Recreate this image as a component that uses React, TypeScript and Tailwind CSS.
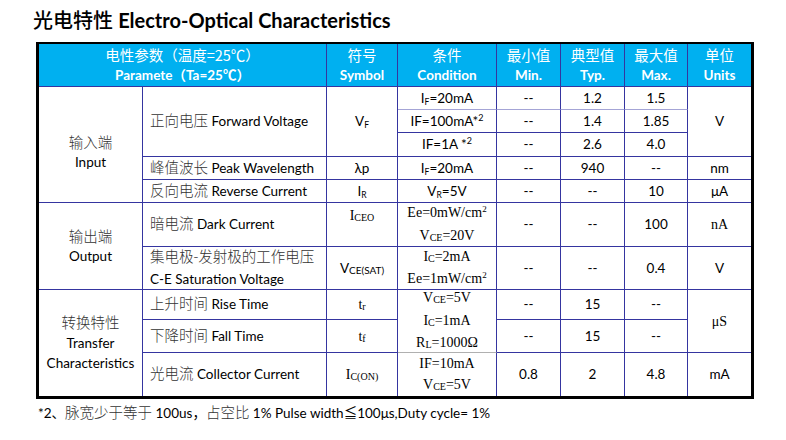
import React from "react";

const N = "border-[#3535a0]";

function Cell({
  c,
  children,
  serif,
}: {
  c: string;
  children?: React.ReactNode;
  serif?: boolean;
}) {
  return (
    <div
      className={`flex flex-col items-center justify-center text-center ${
        serif ? "font-['Liberation_Serif','Noto_Sans_CJK_SC',serif] text-[14px]" : "text-[13.5px]"
      } ${c}`}
    >
      {children}
    </div>
  );
}

function Sub({ children, serif }: { children: React.ReactNode; serif?: boolean }) {
  return (
    <span className={`${serif ? "text-[10px] top-[1px]" : "text-[8.5px] top-[2px]"} relative`}>{children}</span>
  );
}

function Sup({ children }: { children: React.ReactNode }) {
  return <span className="text-[9px] relative -top-[5px]">{children}</span>;
}

function Zh({ children }: { children: React.ReactNode }) {
  return (
    <span className="text-[#333] text-[14.5px] font-['Noto_Sans_CJK_SC',sans-serif] font-light">{children}</span>
  );
}

export default function App() {
  const rb = `border-r ${N}`;
  const bb = `border-b ${N}`;
  return (
    <div className="w-[786px] h-[440px] bg-white text-black font-['Lato','Noto_Sans_CJK_SC',sans-serif] pt-[7px]">
      <div className="pl-[33px] text-[20px] leading-[26px]">
        <span className="font-['Noto_Sans_CJK_SC',sans-serif] font-medium">光电特性</span>{" "}
        <span className="font-bold">Electro-Optical Characteristics</span>
      </div>
      <div className="ml-[36px] mt-[9px] w-[718px] border-black border-t-[2px] border-l-[3px] border-r-[3px] border-b-[3px]">
        <div className="grid grid-cols-[104px_184px_71px_99px_64px_64px_63px_63px] grid-rows-[43px_23px_23px_24px_23px_23px_44px_43px_30px_33px_43px]">
          {/* header */}
          <div className={`col-start-1 col-span-2 row-start-1 bg-[#00b0f0] text-white flex flex-col items-center justify-center text-[13.5px] leading-[21px] ${rb} ${bb}`}>
            <div className="font-['Noto_Sans_CJK_SC',sans-serif] text-[14.5px]">电性参数（温度=25℃）</div>
            <div className="font-bold">Paramete（Ta=25℃）</div>
          </div>
          {[
            ["符号", "Symbol"],
            ["条件", "Condition"],
            ["最小值", "Min."],
            ["典型值", "Typ."],
            ["最大值", "Max."],
            ["单位", "Units"],
          ].map(([zh, en], i) => (
            <div
              key={en}
              className={`row-start-1 bg-[#00b0f0] text-white flex flex-col items-center justify-center text-[13.5px] leading-[21px] ${bb} ${
                i < 5 ? rb : ""
              }`}
            >
              <div className="font-['Noto_Sans_CJK_SC',sans-serif] text-[14.5px]">{zh}</div>
              <div className="font-bold">{en}</div>
            </div>
          ))}

          {/* column 1 groups */}
          <Cell c={`col-start-1 row-start-2 row-span-5 leading-[20px] pt-[14px] ${rb} ${bb}`}>
            <Zh>输入端</Zh>
            <div>Input</div>
          </Cell>
          <Cell c={`col-start-1 row-start-7 row-span-2 leading-[21px] ${rb} ${bb}`}>
            <Zh>输出端</Zh>
            <div>Output</div>
          </Cell>
          <Cell c={`col-start-1 row-start-9 row-span-3 leading-[20.5px] ${rb}`}>
            <Zh>转换特性</Zh>
            <div>Transfer</div>
            <div>Characteristics</div>
          </Cell>

          {/* column 2 */}
          {[
            { r: "row-start-2 row-span-3", t: ["正向电压", "Forward Voltage"] },
            { r: "row-start-5", t: ["峰值波长", "Peak Wavelength"] },
            { r: "row-start-6", t: ["反向电流", "Reverse Current"] },
            { r: "row-start-7", t: ["暗电流", "Dark Current"] },
            { r: "row-start-9", t: ["上升时间", "Rise Time"] },
            { r: "row-start-10", t: ["下降时间", "Fall Time"] },
            { r: "row-start-11", t: ["光电流", "Collector Current"], last: true },
          ].map((x) => (
            <div
              key={x.t[1]}
              className={`col-start-2 ${x.r} flex items-center pl-[7px] pb-[2px] text-[13.5px] ${rb} ${x.last ? "" : bb}`}
            >
              <span>
                <Zh>{x.t[0]}</Zh> {x.t[1]}
              </span>
            </div>
          ))}
          <div className={`col-start-2 row-start-8 flex flex-col justify-center pl-[7px] pb-[2px] text-[13.5px] leading-[22px] ${rb} ${bb}`}>
            <div>
              <Zh>集电极-发射极的工作电压</Zh>
            </div>
            <div>C-E Saturation Voltage</div>
          </div>

          {/* column 3 symbol */}
          <Cell c={`col-start-3 row-start-2 row-span-3 ${rb} ${bb}`}>
            <span>
              V<Sub>F</Sub>
            </span>
          </Cell>
          <Cell c={`col-start-3 row-start-5 ${rb} ${bb}`}>λp</Cell>
          <Cell c={`col-start-3 row-start-6 ${rb} ${bb}`}>
            <span>
              I<Sub>R</Sub>
            </span>
          </Cell>
          <Cell serif c={`col-start-3 row-start-7 !justify-start pt-[2px] ${rb} ${bb}`}>
            <span>
              I<Sub serif>CEO</Sub>
            </span>
          </Cell>
          <Cell c={`col-start-3 row-start-8 ${rb} ${bb}`}>
            <span>
              V<Sub serif>CE(SAT)</Sub>
            </span>
          </Cell>
          <Cell serif c={`col-start-3 row-start-9 ${rb} ${bb}`}>
            <span>
              t<Sub serif>r</Sub>
            </span>
          </Cell>
          <Cell serif c={`col-start-3 row-start-10 ${rb} ${bb}`}>
            <span>
              t<Sub serif>f</Sub>
            </span>
          </Cell>
          <Cell serif c={`col-start-3 row-start-11 ${rb}`}>
            <span>
              I<Sub serif>C(ON)</Sub>
            </span>
          </Cell>

          {/* column 4 condition */}
          <Cell c={`col-start-4 row-start-2 ${rb} border-b border-b-[#a4a4d6]`}>
            <span>
              I<Sub>F</Sub>=20mA
            </span>
          </Cell>
          <Cell c={`col-start-4 row-start-3 ${rb} ${bb}`}>
            <span>
              IF=100mA*<Sup>2</Sup>
            </span>
          </Cell>
          <Cell c={`col-start-4 row-start-4 ${rb} ${bb}`}>
            <span>
              IF=1A *<Sup>2</Sup>
            </span>
          </Cell>
          <Cell c={`col-start-4 row-start-5 ${rb} ${bb}`}>
            <span>
              I<Sub>F</Sub>=20mA
            </span>
          </Cell>
          <Cell c={`col-start-4 row-start-6 ${rb} ${bb}`}>
            <span>
              V<Sub>R</Sub>=5V
            </span>
          </Cell>
          <Cell serif c={`col-start-4 row-start-7 leading-[21px] ${rb} ${bb}`}>
            <span>
              Ee=0mW/cm<Sup>2</Sup>
            </span>
            <span>
              V<Sub serif>CE</Sub>=20V
            </span>
          </Cell>
          <Cell serif c={`col-start-4 row-start-8 leading-[21px] ${rb} ${bb}`}>
            <span>
              I<Sub serif>C</Sub>=2mA
            </span>
            <span>
              Ee=1mW/cm<Sup>2</Sup>
            </span>
          </Cell>
          <Cell serif c={`col-start-4 row-start-9 row-span-2 leading-[21.5px] ${rb} border-b border-b-[#b0b0b0]`}>
            <span>
              V<Sub serif>CE</Sub>=5V
            </span>
            <span>
              I<Sub serif>C</Sub>=1mA
            </span>
            <span>
              R<Sub serif>L</Sub>=1000Ω
            </span>
          </Cell>
          <Cell serif c={`col-start-4 row-start-11 leading-[21px] ${rb}`}>
            <span>IF=10mA</span>
            <span>
              V<Sub serif>CE</Sub>=5V
            </span>
          </Cell>

          {/* min typ max */}
          {[
            ["--", "1.2", "1.5"],
            ["--", "1.4", "1.85"],
            ["--", "2.6", "4.0"],
            ["--", "940", "--"],
            ["--", "--", "10"],
            ["--", "--", "100"],
            ["--", "--", "0.4"],
            ["--", "15", "--"],
            ["--", "15", "--"],
            ["0.8", "2", "4.8"],
          ].map((row, ri) =>
            row.map((v, ci) => (
              <div
                key={`${ri}-${ci}`}
                className={`flex items-center justify-center text-[13.5px] ${rb} ${ri < 9 ? (ri === 0 ? "border-b border-b-[#a4a4d6]" : bb) : ""}`}
                style={{ gridColumnStart: 5 + ci, gridRowStart: 2 + ri }}
              >
                {v}
              </div>
            ))
          )}

          {/* units */}
          <Cell c={`col-start-8 row-start-2 row-span-3 ${bb}`}>V</Cell>
          <Cell c={`col-start-8 row-start-5 ${bb}`}>nm</Cell>
          <Cell c={`col-start-8 row-start-6 ${bb}`}>μA</Cell>
          <Cell serif c={`col-start-8 row-start-7 ${bb}`}>nA</Cell>
          <Cell c={`col-start-8 row-start-8 ${bb}`}>V</Cell>
          <Cell serif c={`col-start-8 row-start-9 row-span-2 ${bb}`}>μS</Cell>
          <Cell c={`col-start-8 row-start-11`}>mA</Cell>
        </div>
      </div>
      <div className="pl-[38px] mt-[3px] text-[13.5px] leading-[20px]">
        *2、<Zh>脉宽少于等于</Zh> 100us，<Zh>占空比</Zh> 1% Pulse width≦100μs,Duty cycle= 1%
      </div>
    </div>
  );
}
